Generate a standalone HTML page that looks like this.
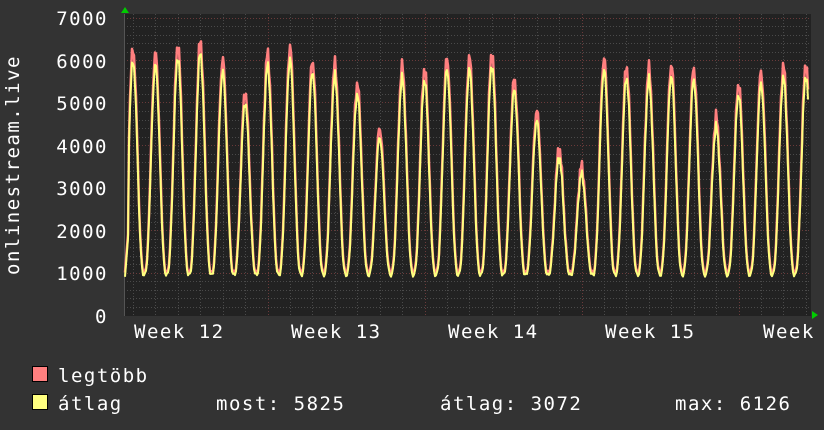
<!DOCTYPE html><html><head><style>
body{margin:0;background:#333;width:824px;height:430px;overflow:hidden;font-family:"DejaVu Sans Mono","Liberation Mono",monospace;color:#fff}
svg{position:absolute;left:0;top:0}
text{letter-spacing:1.5px}
</style></head><body>
<svg width="824" height="430" id="s" font-family="DejaVu Sans Mono, Liberation Mono, monospace" font-size="19" fill="#fff">
<rect x="124" y="14" width="687" height="302" fill="#222"/>
<g id="grid"></g>
<g id="data"></g>
<g text-anchor="end">
<text x="108" y="25">7000</text><text x="108" y="68">6000</text><text x="108" y="110">5000</text>
<text x="108" y="153">4000</text><text x="108" y="195">3000</text><text x="108" y="238">2000</text>
<text x="108" y="280">1000</text><text x="108" y="323">0</text>
</g>
<text transform="translate(19,165) rotate(-90)" text-anchor="middle">onlinestream.live</text>
<text x="134" y="338">Week 12</text><text x="291" y="338">Week 13</text><text x="448" y="338">Week 14</text><text x="605" y="338">Week 15</text><text x="763" y="338">Week</text>
<polygon points="121,13 129,13 125,7" fill="#0c0"/>
<polygon points="812,311 812,319 818,315" fill="#0c0"/>
<rect x="32.5" y="366.5" width="15" height="15" fill="#ff7f7f" stroke="#000"/>
<rect x="32.5" y="394.5" width="15" height="15" fill="#ffff7f" stroke="#000"/>
<text x="58" y="382">legtöbb</text>
<text x="58" y="410">átlag</text>
<text x="216" y="410">most: 5825</text>
<text x="440" y="410">átlag: 3072</text>
<text x="675" y="410">max: 6126</text>
</svg>
<script>
var NS="http://www.w3.org/2000/svg",g=document.getElementById("grid"),d=document.getElementById("data");
function ln(x1,y1,x2,y2,c,da,p){var l=document.createElementNS(NS,"line");l.setAttribute("x1",x1);l.setAttribute("y1",y1);l.setAttribute("x2",x2);l.setAttribute("y2",y2);l.setAttribute("stroke",c);l.setAttribute("stroke-width",1);if(da)l.setAttribute("stroke-dasharray",da);(p||g).appendChild(l);}
function Y(v){return 315-v*0.0425;}
for(var v=200;v<=7000;v+=200){var y=Math.round(Y(v))+.5;ln(124,y,811,y,v%1000==0?"#6a3a3a":"#4a4a4a","1,2");}
var x0=110.5;for(var i=1;i<32;i++){var x=Math.round(x0+i*22.43)+.5;if(x>811)break;ln(x,14,x,315,(i%7==0)?"#6a3a3a":"#4a4a4a","1,2");}
var peaks=[6250,6150,6350,6450,6000,5250,6150,6300,6000,5900,5450,4400,5850,5800,6050,6050,6150,5550,4800,3900,3500,6050,5850,5800,5900,5800,4650,5450,5700,5850,5900];
var ptsM=[],ptsA=[];
for(var x=125;x<=808;x+=1){var t=(x-133)/22.43;var k=Math.round(t);var ph=t-k;var kk=Math.max(0,Math.min(peaks.length-1,k));var P=peaks[kk];
var c=Math.cos(ph*Math.PI);var f=Math.pow(Math.max(0,c),2.8);
var base=1000+40*Math.sin(x*1.7);var n=Math.sin(x*3.1)*120+Math.sin(x*1.3)*80;
var m=base+(P-base)*f+n*f;var a=base-60+(P*0.965-base)*f+n*0.7*f;
if(x<129){m=1000+(x-125)*300;a=m-100;}
ptsM.push(x+","+Y(m).toFixed(1));ptsA.push(x+","+Y(a).toFixed(1));}
function pl(pts,c,w){var p=document.createElementNS(NS,"polyline");p.setAttribute("points",pts.join(" "));p.setAttribute("fill","none");p.setAttribute("stroke",c);p.setAttribute("stroke-width",w);p.setAttribute("stroke-linejoin","round");d.appendChild(p);}
pl(ptsM,"#ff7f7f",2.5);pl(ptsA,"#ffff7f",2);
ln(124.5,14,124.5,316,"#555");
</script>
</body></html>
